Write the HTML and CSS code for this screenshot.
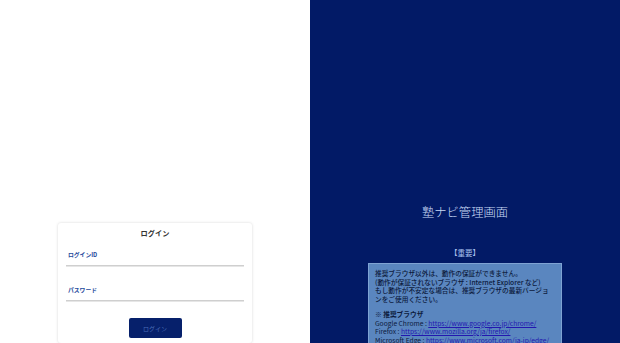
FILE: index.html
```html
<!DOCTYPE html>
<html lang="ja">
<head>
<meta charset="utf-8">
<link rel="stylesheet" href="styles.css">
</head>
<body>
<div class="page">
  <div class="left">
    <div class="card">
      <div class="card-title">ログイン</div>
      <div class="field">
        <div class="label">ログインID</div>
        <div class="line"></div>
      </div>
      <div class="field">
        <div class="label">パスワード</div>
        <div class="line"></div>
      </div>
      <div class="actions"><button class="btn">ログイン</button></div>
    </div>
  </div>
  <div class="right">
    <div class="title">塾ナビ管理画面</div>
    <div class="important">【重要】</div>
    <div class="notice">
      <p class="intro">推奨ブラウザ以外は、動作の保証ができません。<br>(動作が保証されないブラウザ : Internet Explorer など)<br>もし動作が不安定な場合は、推奨ブラウザの最新バージョンをご使用ください。</p>
      <p class="gap"><span class="strong">※ 推奨ブラウザ</span><br>
      Google Chrome : <a href="#">https://www.google.co.jp/chrome/</a><br>
      Firefox : <a href="#">https://www.mozilla.org/ja/firefox/</a><br>
      Microsoft Edge : <a href="#">https://www.microsoft.com/ja-jp/edge/</a></p>
    </div>
  </div>
</div>
</body>
</html>
```
FILE: styles.css
```css
html, body { margin: 0; padding: 0; }
body {
  font-family: "Noto Sans CJK JP", "Noto Sans", sans-serif;
  width: 620px;
  height: 343px;
  overflow: hidden;
  background: #fff;
}
.page {
  display: flex;
  height: 343px;
}
.left {
  width: 310px;
  display: flex;
  flex-direction: column;
  align-items: center;
  padding-top: 223px;
  box-sizing: border-box;
}
.card {
  width: 194px;
  height: 140px;
  box-sizing: border-box;
  padding: 5px 8px 0;
  border-radius: 3px;
  background: #fff;
  box-shadow: 0 0 3px rgba(0,0,0,0.16);
}
.card-title {
  text-align: center;
  font-size: 7.2px;
  font-weight: 700;
  color: #333;
  line-height: 11px;
}
.field { margin-top: 12px; }
.field + .field { margin-top: 19px; }
.label {
  font-size: 5.8px;
  font-weight: 700;
  color: #1e4a9c;
  padding-left: 2px;
  line-height: 8px;
}
.line {
  margin-top: 6px;
  height: 1px;
  background: #cfcfcf;
  border-bottom: 1px solid #e6e6e6;
}
.actions {
  display: flex;
  justify-content: center;
  margin-top: 16px;
}
.btn {
  width: 53px;
  height: 20px;
  border: none;
  border-radius: 2px;
  background: #06206b;
  color: #4a6cb8;
  font-family: inherit;
  font-size: 6px;
  padding: 0;
}
.right {
  width: 310px;
  background: #021a66;
  display: flex;
  flex-direction: column;
  align-items: center;
  padding-top: 202px;
  box-sizing: border-box;
}
.title {
  font-size: 12.3px;
  font-weight: 300;
  color: #c9dbf7;
  line-height: 20px;
}
.important {
  margin-top: 26px;
  font-size: 7.5px;
  color: #a9c1ee;
  line-height: 10px;
}
.notice {
  margin-top: 5px;
  width: 194px;
  box-sizing: border-box;
  background: #5a86bf;
  border: 1px solid #7fa3d3;
  padding: 5px 6px 6px;
  font-size: 6.7px;
  line-height: 8.5px;
  color: #0c1a3c;
}
.notice p { margin: 0; }
.notice .intro { font-weight: 500; }
.notice .gap { margin-top: 7px; }
.strong { font-weight: 700; }
.notice a { color: #2317b0; text-decoration: underline; }
```
